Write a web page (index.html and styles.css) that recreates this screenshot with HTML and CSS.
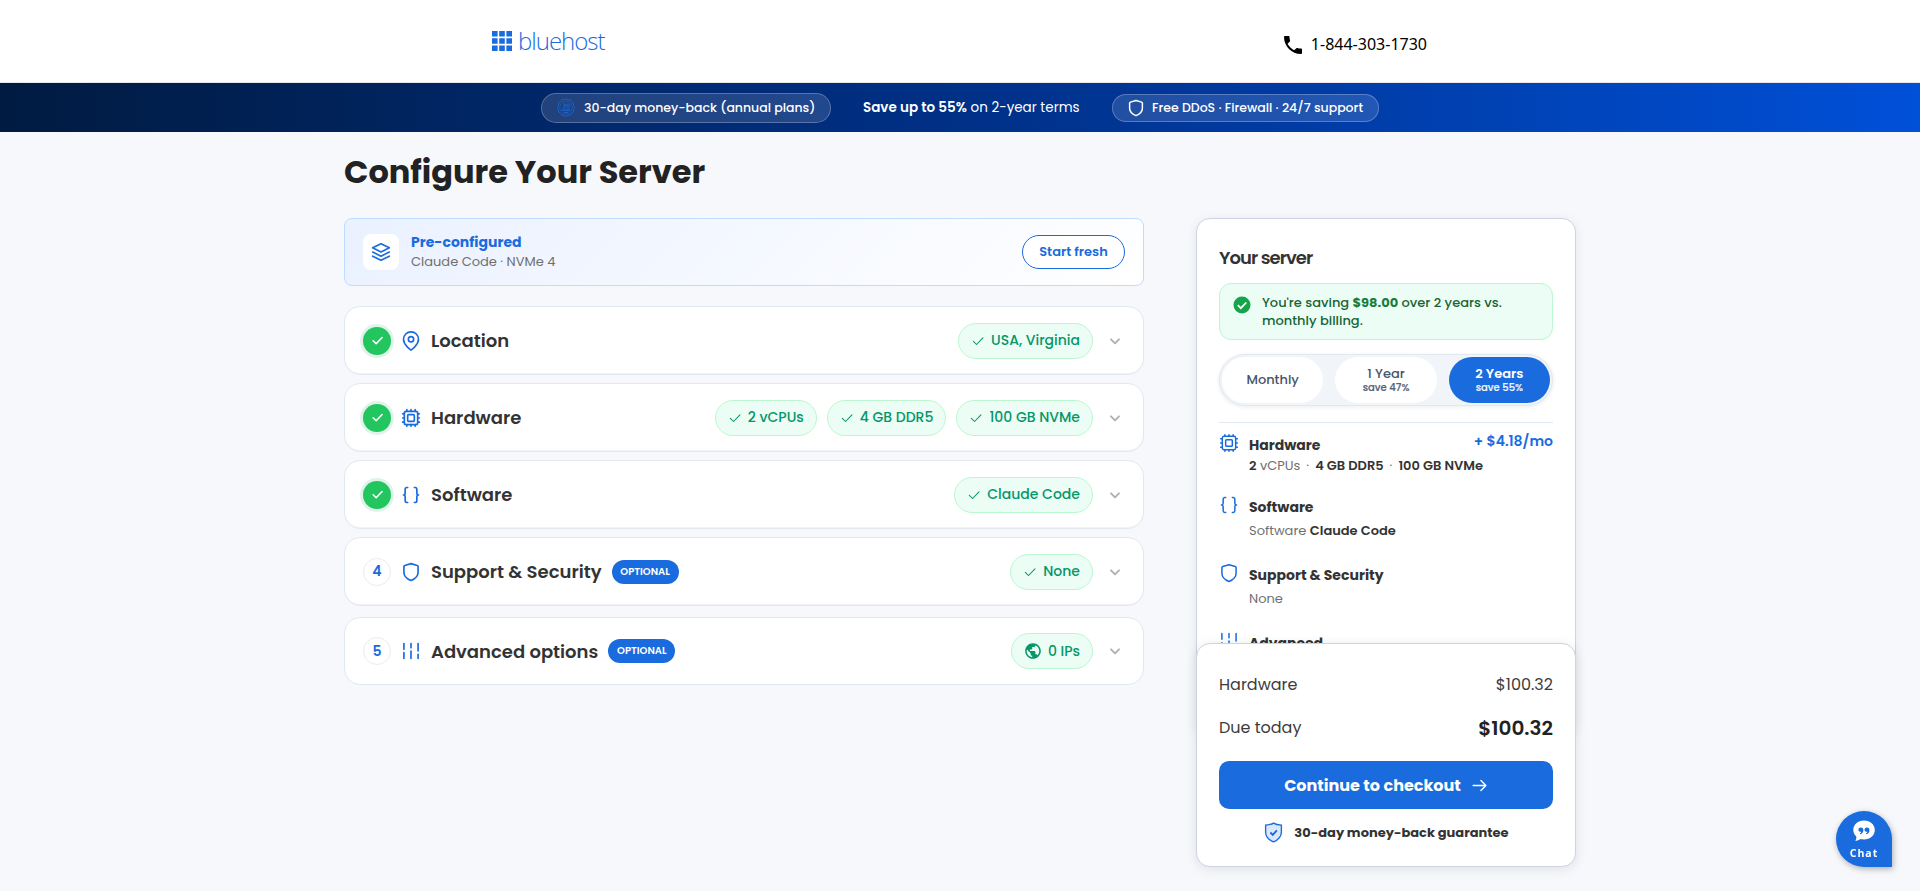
FILE: index.html
```html
<!DOCTYPE html>
<html lang="en">
<head>
<meta charset="utf-8">
<title>Configure Your Server</title>
<link rel="stylesheet" href="styles.css">
</head>
<body>
<svg class="sprite" aria-hidden="true">
  <symbol id="check" viewBox="0 0 24 24"><path d="M4 12.5l5.500 5.500L20.500 6.500"/></symbol>
  <symbol id="chevron" viewBox="0 0 24 24"><path d="M6 9.500l6 6 6-6"/></symbol>
  <symbol id="pin" viewBox="0 0 24 24"><path d="M21 10c0 7-9 13-9 13s-9-6-9-13a9 9 0 0 1 18 0z"/><circle cx="12" cy="10" r="3.200"/></symbol>
  <symbol id="cpu" viewBox="0 0 24 24"><rect x="4" y="4" width="16" height="16" rx="2"/><rect x="8" y="8" width="8" height="8" rx="1"/><path d="M7 2v2M12 2v2M17 2v2M7 20v2M12 20v2M17 20v2M2 7h2M2 12h2M2 17h2M20 7h2M20 12h2M20 17h2"/></symbol>
  <symbol id="braces" viewBox="0 0 24 24"><path d="M8 3H7a2 2 0 0 0-2 2v5a2 2 0 0 1-2 2 2 2 0 0 1 2 2v5a2 2 0 0 0 2 2h1M16 21h1a2 2 0 0 0 2-2v-5a2 2 0 0 1 2-2 2 2 0 0 1-2-2V5a2 2 0 0 0-2-2h-1"/></symbol>
  <symbol id="shield" viewBox="0 0 24 24"><path d="M12 2l-7.500 2.200c-.5.200-1 .6-1 1.200v6.800c0 5 3.300 7.800 8.500 10 5.200-2.200 8.500-5 8.500-10V5.400c0-.6-.5-1-1-1.200z"/></symbol>
  <symbol id="sliders" viewBox="0 0 24 24"><path d="M3.500 3v7M3.500 14v7M12 3v5M12 12v9M20.500 3v9M20.500 16v5"/></symbol>
  <symbol id="layers" viewBox="0 0 24 24"><path d="M12 2L2 7l10 5 10-5zM2 12l10 5 10-5M2 17l10 5 10-5"/></symbol>
  <symbol id="arrow" viewBox="0 0 24 24"><path d="M3 12h18M14 5l7 7-7 7"/></symbol>
</svg>

<header class="topbar">
  <div class="brand">
    <svg class="brand-grid" viewBox="0 0 20 20"><path d="M0 0h5.600v5.600H0zM7.200 0h5.600v5.600H7.200zM14.400 0H20v5.600h-5.600zM0 7.200h5.600v5.600H0zM7.200 7.200h5.600v5.600H7.200zM14.400 7.200H20v5.600h-5.600zM0 14.400h5.600V20H0zM7.200 14.400h5.600V20H7.200zM14.400 14.400H20V20h-5.600z"/></svg>
    <span class="brand-name">bluehost</span>
  </div>
  <div class="phone">
    <svg class="phone-icon" viewBox="3 3 18 18"><path d="M20 15.500c-1.250 0-2.450-.2-3.570-.57-.35-.11-.74-.03-1.020.24l-2.200 2.200c-2.830-1.440-5.150-3.750-6.590-6.590l2.200-2.210c.28-.26.36-.65.25-1C8.700 6.450 8.500 5.250 8.500 4c0-.55-.45-1-1-1H4c-.55 0-1 .45-1 1 0 9.390 7.610 17 17 17 .55 0 1-.45 1-1v-3.500c0-.55-.45-1-1-1z"/></svg>
    <span class="phone-number">1-844-303-1730</span>
  </div>
</header>

<div class="promo">
  <div class="promo-pill pill-a">
    <svg class="seal" viewBox="0 0 20 20"><path d="M10 .8l2 1.100 2.300-.1 1.200 2 2 1.200-.1 2.300 1.200 2.200-1.200 2.100.1 2.300-2 1.200-1.200 2-2.300 0-2 1.300-2-1.300-2.300 0-1.200-2-2-1.200.1-2.300L1.400 9.500l1.200-2.200-.1-2.300 2-1.200 1.200-2 2.300.1z"/><circle cx="10" cy="9.500" r="6.200" stroke-dasharray="2 1"/><path d="M7 6h2.200v1.500H7.800h1.400V9H7M11 6h2.200v3H11zM6.500 11h7v1.500h-7zM8 14.500h4"/></svg>
    <span>30-day money-back (annual plans)</span>
  </div>
  <div class="promo-text"><b>Save up to 55%</b> <span>on 2-year terms</span></div>
  <div class="promo-pill pill-b">
    <svg class="ico pill-shield"><use href="#shield"/></svg>
    <span>Free DDoS · Firewall · 24/7 support</span>
  </div>
</div>

<main class="page">
  <section class="config">
    <h1>Configure Your Server</h1>
    <div class="preset">
      <div class="preset-icon"><svg class="ico"><use href="#layers"/></svg></div>
      <div class="preset-copy"><span class="preset-title">Pre-configured</span><span class="preset-sub">Claude Code · NVMe 4</span></div>
      <button class="fresh">Start fresh</button>
    </div>

    <div class="steps">
      <div class="step">
        <span class="num done"><svg class="ico"><use href="#check"/></svg></span>
        <svg class="ico step-icon"><use href="#pin"/></svg>
        <span class="step-title">Location</span>
        <div class="chips"><span class="chip"><svg class="ico"><use href="#check"/></svg><span>USA, Virginia</span></span></div>
        <svg class="ico chev"><use href="#chevron"/></svg>
      </div>
      <div class="step">
        <span class="num done"><svg class="ico"><use href="#check"/></svg></span>
        <svg class="ico step-icon"><use href="#cpu"/></svg>
        <span class="step-title">Hardware</span>
        <div class="chips">
          <span class="chip"><svg class="ico"><use href="#check"/></svg><span>2 vCPUs</span></span>
          <span class="chip"><svg class="ico"><use href="#check"/></svg><span>4 GB DDR5</span></span>
          <span class="chip"><svg class="ico"><use href="#check"/></svg><span>100 GB NVMe</span></span>
        </div>
        <svg class="ico chev"><use href="#chevron"/></svg>
      </div>
      <div class="step">
        <span class="num done"><svg class="ico"><use href="#check"/></svg></span>
        <svg class="ico step-icon"><use href="#braces"/></svg>
        <span class="step-title">Software</span>
        <div class="chips"><span class="chip"><svg class="ico"><use href="#check"/></svg><span>Claude Code</span></span></div>
        <svg class="ico chev"><use href="#chevron"/></svg>
      </div>
      <div class="step">
        <span class="num">4</span>
        <svg class="ico step-icon"><use href="#shield"/></svg>
        <span class="step-title">Support &amp; Security</span>
        <span class="optional">OPTIONAL</span>
        <div class="chips"><span class="chip"><svg class="ico"><use href="#check"/></svg><span>None</span></span></div>
        <svg class="ico chev"><use href="#chevron"/></svg>
      </div>
      <div class="step last">
        <span class="num">5</span>
        <svg class="ico step-icon"><use href="#sliders"/></svg>
        <span class="step-title">Advanced options</span>
        <span class="optional">OPTIONAL</span>
        <div class="chips"><span class="chip globe"><svg viewBox=".5 .5 23 23"><path d="M12 2C6.480 2 2 6.480 2 12s4.480 10 10 10 10-4.480 10-10S17.520 2 12 2zm-1 17.930c-3.950-.49-7-3.850-7-7.930 0-.62.08-1.210.21-1.790L9 15v1c0 1.100.9 2 2 2v1.930zm6.900-2.540c-.26-.81-1-1.390-1.900-1.390h-1v-3c0-.55-.45-1-1-1H8v-2h2c.55 0 1-.45 1-1V7h2c1.100 0 2-.9 2-2v-.41c2.930 1.190 5 4.060 5 7.410 0 2.080-.8 3.970-2.100 5.390z"/></svg><span>0 IPs</span></span></div>
        <svg class="ico chev"><use href="#chevron"/></svg>
      </div>
    </div>
  </section>

  <aside class="side">
    <div class="summary">
      <h2>Your server</h2>
      <div class="saving">
        <svg class="saving-icon" viewBox="0 0 18 18"><circle cx="9" cy="9" r="8.500"/><path d="M4.800 9.200l3 3 5.500-5.700"/></svg>
        <p>You're saving <b>$98.00</b> over 2 years vs.<br>monthly billing.</p>
      </div>
      <div class="terms">
        <div class="term"><span>Monthly</span></div>
        <div class="term"><span>1 Year</span><small>save 47%</small></div>
        <div class="term active"><span>2 Years</span><small>save 55%</small></div>
      </div>
      <div class="items">
        <div class="item hw">
          <svg class="ico"><use href="#cpu"/></svg>
          <div class="item-copy"><span class="item-title">Hardware</span><span class="item-sub">2<span class="unit"> vCPUs</span><i>·</i>4 GB DDR5<i>·</i>100 GB NVMe</span></div>
          <span class="price">+ $4.18/mo</span>
        </div>
        <div class="item sw">
          <svg class="ico"><use href="#braces"/></svg>
          <div class="item-copy"><span class="item-title">Software</span><span class="item-sub"><span class="unit">Software </span>Claude Code</span></div>
        </div>
        <div class="item ss">
          <svg class="ico"><use href="#shield"/></svg>
          <div class="item-copy"><span class="item-title">Support &amp; Security</span><span class="item-sub"><span class="unit">None</span></span></div>
        </div>
        <div class="item">
          <svg class="ico"><use href="#sliders"/></svg>
          <div class="item-copy"><span class="item-title">Advanced</span></div>
        </div>
      </div>
    </div>
    <div class="totals">
      <div class="line"><span>Hardware</span><span>$100.32</span></div>
      <div class="line due"><span>Due today</span><b>$100.32</b></div>
      <button class="checkout"><span>Continue to checkout</span><svg class="ico"><use href="#arrow"/></svg></button>
      <div class="guarantee">
        <svg viewBox="0 0 18 20"><path class="g-shield" d="M9 1c2.200 1.400 4.600 1.800 7.500 2v6.500c0 4.500-3 7.500-7.500 9.500-4.500-2-7.500-5-7.500-9.500V3C4.400 2.800 6.800 2.400 9 1z"/><path class="g-check" d="M6 10l2.300 2.200L12.200 8"/></svg>
        <span>30-day money-back guarantee</span>
      </div>
    </div>
  </aside>
</main>

<div class="chat">
  <svg viewBox="0 0 22 22"><path class="bubble" d="M11 .5c6 0 10.800 4 10.800 9.500S17 19.500 11 19.500c-1.300 0-2.400-.2-3.500-.5-1.500.9-3.300 1.700-5.200 2 .9-1.400 1.200-3 1-4.500C1.400 14.800.3 12.500.3 10 .3 4.500 5 .5 11 .5z"/><path class="quotes" d="M8.200 7.500a2.300 2.300 0 0 1 2.200 2.400c0 2-1.100 3.600-3.200 4.400l-.4-.7c.9-.5 1.400-1.200 1.500-1.900A2.200 2.200 0 1 1 8.200 7.500zM14.300 7.500a2.300 2.300 0 0 1 2.200 2.400c0 2-1.100 3.600-3.200 4.400l-.4-.7c.9-.5 1.400-1.200 1.500-1.900a2.200 2.200 0 1 1-.1-4.200z"/></svg>
  <span>Chat</span>
</div>
</body>
</html>
```
FILE: styles.css
```css
* { box-sizing: border-box; }
body { margin: 0; height: 891px; overflow: hidden; background: #f6f8fc; color: #333; font-family: Poppins, Inter, "Noto Sans", sans-serif; }
h1, h2, p { margin: 0; }
button { font-family: inherit; }
.sprite { display: none; }
.ico { fill: none; stroke: currentColor; stroke-width: 2; stroke-linecap: round; stroke-linejoin: round; flex: none; }

.topbar { display: flex; justify-content: space-between; height: 83px; padding: 0 493px 0 492px; background: #fff; border-bottom: 1px solid #e8e8ec; }
.brand { display: flex; padding-top: 31px; gap: 6px; }
.brand-grid { width: 20px; height: 20px; fill: #196bde; }
.brand-name { margin-top: -5px; font: 300 24px/30px "Open Sans", sans-serif; letter-spacing: -1px; color: #196bde; }
.phone { display: flex; padding-top: 33px; gap: 9px; color: #000; }
.phone-icon { width: 18px; height: 18px; margin-top: 3px; }
.phone-number { margin-top: -1px; font: 16px/24px "Noto Sans", sans-serif; }

.promo { display: flex; justify-content: center; align-items: center; height: 49px; gap: 32px; color: #fff; background: linear-gradient(90deg, #001b41 0%, #003087 50%, #0050d8 100%); }
.promo-pill { display: flex; align-items: center; padding: 0 15px; gap: 8px; border: 1px solid rgba(255,255,255,.25); border-radius: 16px; background: rgba(255,255,255,.13); font-size: 12.500px; font-weight: 500; white-space: nowrap; }
.pill-a { width: 290px; height: 30px; padding-left: 14px; }
.pill-b { width: 267px; height: 28px; }
.seal { flex: none; width: 20px; height: 20px; fill: none; stroke: #196bde; stroke-width: 1; opacity: .8; }
.pill-shield { width: 18px; height: 18px; margin: 0 -1px; }
.promo-text { width: 217px; white-space: nowrap; font-size: 13.500px; }
.promo-text b { font-weight: 600; }

.page { display: flex; justify-content: space-between; width: 1232px; margin: 0 auto; }
.config { width: 800px; padding-top: 16px; }
h1 { height: 48px; font-size: 32px; line-height: 48px; font-weight: 700; color: #222; }

.preset { display: flex; align-items: center; height: 68px; margin-top: 22px; padding: 0 18px; border: 1px solid #bfdbfe; border-radius: 8px; background: linear-gradient(135deg, #eaf1ff, #fff); }
.preset-icon { display: grid; place-items: center; width: 36px; height: 36px; border-radius: 8px; background: #fff; color: #196bde; }
.preset-icon .ico { width: 20px; height: 20px; }
.preset-copy { display: flex; flex: 1; flex-direction: column; margin: -1px 0 0 12px; }
.preset-title { font-size: 14px; line-height: 20px; font-weight: 700; color: #196bde; }
.preset-sub { font-size: 13px; line-height: 19px; color: #6f6f6f; }
.fresh { width: 103px; height: 34px; padding: 0; border: 1px solid #196bde; border-radius: 17px; background: #fff; color: #196bde; font-size: 13px; font-weight: 600; }

.steps { display: flex; flex-direction: column; gap: 8px; margin-top: 20px; }
.step { display: flex; align-items: center; height: 69px; padding: 0 18px; border: 1px solid #e2e8f0; border-radius: 16px; background: #fff; box-shadow: inset 0 -1px 0 #f1f3f7; }
.step.last { height: 68px; margin-top: 3px; box-shadow: none; }
.num { display: grid; place-items: center; width: 28px; height: 28px; border-radius: 50%; border: 1px solid #ececf0; color: #196bde; font-size: 14px; font-weight: 600; }
.num.done { border: 0; background: #22c55e; color: #fff; box-shadow: 0 0 0 3px #e0f3ea; }
.num .ico { width: 13px; height: 13px; stroke-width: 3; }
.step-icon { width: 20px; height: 20px; margin: 0 10px; color: #196bde; }
.step-title { font-size: 18px; font-weight: 600; color: #333; }
.optional { display: grid; place-items: center; width: 67px; height: 24px; margin-left: 10px; border-radius: 12px; background: #196bde; color: #fff; font-size: 10px; font-weight: 600; }
.chips { display: flex; gap: 10px; margin-left: auto; }
.chip { display: flex; align-items: center; gap: 6px; height: 36px; padding: 0 12px; border: 1px solid #bbf7d0; border-radius: 18px; background: #ecfdf5; color: #059669; font-size: 14px; font-weight: 500; }
.chip .ico { width: 14px; height: 14px; stroke-width: 1.800; }
.globe svg { width: 18px; height: 18px; fill: currentColor; }
.chev { width: 16px; height: 16px; margin: 0 2px 0 14px; color: #b0b0b0; stroke-width: 2.800; }

.side { width: 380px; padding-top: 86px; }
.summary { height: 518px; padding: 0 22px; border: 1px solid #ccd3e2; border-radius: 14px; background: #fff; box-shadow: 0 2px 12px rgba(15,23,42,.08); }
h2 { padding-top: 26px; font-size: 18px; line-height: 26px; font-weight: 600; letter-spacing: -.95px; }
.saving { display: flex; height: 57px; margin-top: 12px; padding: 10px 14px 10px 13px; gap: 11px; border: 1px solid #bbf7d0; border-radius: 12px; background: #ecfdf5; color: #166534; font-size: 13px; line-height: 18px; font-weight: 500; }
.saving b { color: #15803d; font-weight: 700; }
.saving-icon { width: 18px; height: 18px; margin-top: 2px; fill: #16a34a; }
.saving-icon path { fill: none; stroke: #fff; stroke-width: 1.800; }
.terms { display: flex; gap: 12px; height: 52px; margin-top: 14px; padding: 2px; border: 1px solid #e2e8f0; border-radius: 26px; background: #f1f5f9; box-shadow: 0 1px 4px rgba(15,23,42,.08); }
.term { display: flex; flex: 1; flex-direction: column; align-items: center; justify-content: center; border-radius: 23px; background: #fff; color: #475569; font-size: 13px; line-height: 16px; font-weight: 500; }
.term small { font-size: 10px; line-height: 12px; color: #56657b; -webkit-text-stroke: .2px currentColor; }
.term.active { background: #196bde; color: #fff; font-weight: 600; }
.term.active small { color: #eef4fd; font-weight: 500; }
.items { margin-top: 16px; border-top: 1px solid #e2e8f0; }
.item { display: flex; }
.item > .ico { width: 20px; height: 20px; margin-right: 10px; color: #196bde; stroke-width: 1.800; }
.item-copy { display: flex; flex: 1; flex-direction: column; min-width: 0; }
.item-title { margin-top: 2px; font-size: 14px; line-height: 20px; font-weight: 700; }
.item-sub { margin-top: 4px; font-size: 13px; line-height: 20px; font-weight: 600; color: #333; white-space: nowrap; }
.item-sub .unit { font-weight: 400; color: #707070; }
.item-sub i { margin: 0 6px; font-style: normal; font-weight: 400; color: #707070; }
.hw { height: 72px; padding-top: 10px; }
.hw .item-sub { margin-top: 1px; }
.sw, .ss { height: 68px; }
.price { font-size: 14px; line-height: 16px; font-weight: 600; color: #196bde; white-space: nowrap; }

.totals { position: relative; height: 224px; margin-top: -93px; padding: 29px 22px 0; border: 1px solid #ccd3e2; border-radius: 14px; background: #fff; box-shadow: 0 2px 12px rgba(15,23,42,.1); }
.line { display: flex; justify-content: space-between; font-size: 16px; line-height: 24px; color: #3c3c3c; }
.due { margin-top: 19px; }
.due b { font-size: 20px; font-weight: 600; color: #222; }
.checkout { display: flex; align-items: center; justify-content: center; gap: 10px; width: 100%; height: 48px; margin-top: 21px; border: 0; border-radius: 10px; background: #196bde; color: #fff; font-size: 16px; font-weight: 700; }
.checkout .ico { width: 17px; height: 17px; }
.guarantee { display: flex; align-items: center; justify-content: center; gap: 11px; margin-top: 13px; padding-left: 1px; font-size: 13px; font-weight: 700; }
.guarantee svg { width: 19px; height: 21px; fill: none; stroke: #196bde; stroke-width: 1.300; }
.guarantee .g-shield { fill: #dbe8fb; }
.g-check { stroke-width: 1.800; }

.chat { position: fixed; left: 1836px; top: 811px; display: flex; flex-direction: column; align-items: center; width: 56px; height: 56px; padding-top: 9px; border-radius: 28px 28px 0 28px; background: #196bde; color: #fff; font: 700 10.500px/14px "Open Sans", sans-serif; letter-spacing: 1px; box-shadow: 1px 2px 6px rgba(0,0,0,.3); }
.chat svg { width: 22px; height: 22px; }
.chat span { margin-top: 4px; }
.bubble { fill: #fff; }
.quotes { fill: #196bde; }
```
